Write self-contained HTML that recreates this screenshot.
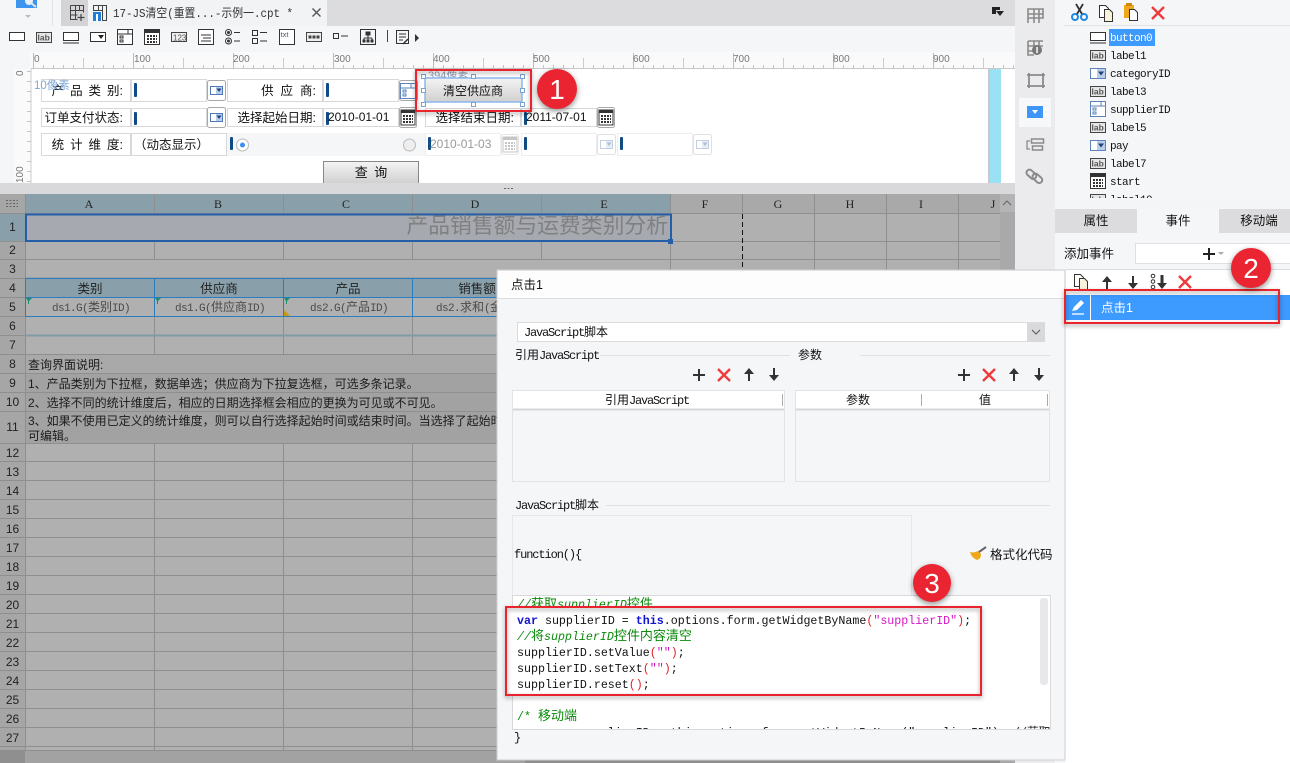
<!DOCTYPE html>
<html><head><meta charset="utf-8"><style>
html,body{margin:0;padding:0;background:#fff;width:1290px;height:763px;overflow:hidden}
svg{display:block}
text{font-family:"Liberation Sans","Noto Sans CJK SC",sans-serif;font-size:12px;fill:#111;white-space:pre}
.m,.m text{font-family:"Liberation Mono","Noto Sans CJK SC",monospace;font-size:11px;letter-spacing:-.6px}
.c{font-size:12px;letter-spacing:0}
.cd{font-family:"Liberation Mono","Noto Sans CJK SC",monospace;font-size:11.65px}
.zh{font-size:13px;font-style:normal;letter-spacing:0}
.rn{text-anchor:middle;font-size:12px;fill:#222}
.ch{font-family:"Liberation Serif",serif;font-size:12px;text-anchor:middle;fill:#222}
.rl{font-size:10px;fill:#777}
.lb{fill:#fff;stroke:#d8d8d8}
.fl{font-size:12.5px;text-anchor:end}
</style></head><body>
<svg width="1290" height="763" viewBox="0 0 1290 763" xmlns="http://www.w3.org/2000/svg">
<defs>
<pattern id="tx" x="33" y="62" width="10" height="7" patternUnits="userSpaceOnUse"><rect x="0" y="3" width="1" height="4" fill="#c4c4c4"/></pattern>
<pattern id="ty" x="24" y="71" width="7" height="10" patternUnits="userSpaceOnUse"><rect x="3" y="0" width="4" height="1" fill="#c4c4c4"/></pattern>
<pattern id="rows" x="0" y="443" width="1000" height="19" patternUnits="userSpaceOnUse"><rect x="0" y="18" width="1000" height="1" fill="#8f8f8f"/></pattern>
<linearGradient id="g" x1="0" y1="0" x2="0" y2="1"><stop offset="0" stop-color="#f4f4f4"/><stop offset="1" stop-color="#d0d0d0"/></linearGradient>
<g id="dd"><rect x=".5" y=".5" width="18" height="20" rx="2" fill="#fff" stroke="#a8a8a8"/><rect x="3.5" y="6.5" width="12" height="8" fill="#fff" stroke="#4f79b5"/><rect x="9" y="7" width="6" height="7" fill="#b9cdea"/><path d="M9.500 8.500h5l-2.500 3.500z" fill="#24407a"/></g>
<g id="cal"><rect x=".5" y=".5" width="17" height="20" rx="2" fill="#fff" stroke="#a8a8a8"/><rect x="2" y="3" width="14" height="15" fill="#fff" stroke="#333"/><rect x="2" y="3" width="14" height="3" fill="#333"/><path d="M4 9h10M4 12h10M4 15h10" stroke="#333" stroke-dasharray="2 1" stroke-width="2"/></g>
<g id="lab"><rect x=".5" y=".5" width="15" height="10" fill="#e6e6e6" stroke="#444"/><text x="1.500" y="8.500" style="font-size:8.500px;fill:#555;font-weight:bold">lab</text></g>
<g id="btn"><rect x=".5" y=".5" width="15" height="8" fill="#fff" stroke="#333"/><path d="M0 11h16" stroke="#333"/></g>
<g id="ddi"><rect x=".5" y=".5" width="15" height="10" fill="#fff" stroke="#5d83b8"/><rect x="7" y="1" width="8" height="9" fill="#b9cdea"/><path d="M8 3.500h6l-3 4z" fill="#24407a"/></g>
<g id="sup"><rect x=".5" y=".5" width="15" height="15" fill="#fff" stroke="#5d83b8"/><path d="M1 5h14M11 1v4" stroke="#5d83b8"/><rect x="3" y="7" width="3" height="2" fill="none" stroke="#5d83b8"/><rect x="3" y="11" width="3" height="2" fill="none" stroke="#5d83b8"/></g>
<g id="calI"><rect x=".5" y=".5" width="15" height="15" fill="#fff" stroke="#333"/><rect x="1" y="1" width="14" height="3" fill="#333"/><path d="M3 7h10M3 10h10M3 13h10" stroke="#333" stroke-dasharray="2 1" stroke-width="2"/></g>
<g id="x"><path d="M1 1l12 12M13 1L1 13" stroke="#ee3b3b" stroke-width="2.400" fill="none"/></g>
<g id="plus"><path d="M6 0v12M0 6h12" stroke="#333" stroke-width="2" fill="none"/></g>
<g id="up"><path d="M5 13V4" stroke="#333" stroke-width="2"/><path d="M0 6l5-6 5 6z" fill="#333"/></g>
<g id="down"><path d="M5 0v9" stroke="#333" stroke-width="2"/><path d="M0 7l5 6 5-6z" fill="#333"/></g>
<g id="copy"><path d="M1.500.5h6l3 3v9h-9z" fill="#fff" stroke="#333"/><path d="M6.500 4.500h5l3 3v9h-8z" fill="#f9f1d9" stroke="#333"/></g>
<g id="h"><rect x=".5" y=".5" width="4" height="4" fill="#fff" stroke="#7aa3d4"/></g>
</defs>

<!-- base chrome -->
<rect width="1290" height="763" fill="#f4f5f7"/>
<rect x="0" y="0" width="61" height="26" fill="#f5f6f7"/>
<rect x="61" y="0" width="954" height="26" fill="#dcdcde"/>
<rect x="61" y="0" width="27" height="26" fill="#d4d4d6"/>
<rect x="88" y="0" width="239" height="26" fill="#f2f3f5"/>
<rect x="0" y="26" width="1015" height="26" fill="#f5f6f8"/>
<rect x="0" y="52" width="1015" height="131" fill="#f5f6f8"/>
<!-- logo -->
<rect x="16" y="0" width="21" height="8" fill="#3d95ee"/>
<circle cx="29" cy="1" r="4" fill="#e8f1fb"/><path d="M31 3l5 4" stroke="#dfe6ee" stroke-width="2"/>
<path d="M25 15h6l-3 3z" fill="#bcbcbc"/>
<path d="M52.500 0v26" stroke="#e4e4e6"/>
<!-- tab icons -->
<g fill="none" stroke="#444"><path d="M70.500 5.500h13v7M70.500 5.500v14h7M70.500 10.500h13M75.500 5.500v14M70.500 15h7M79.500 5.500v5"/><path d="M81 14v7M77.500 17.500h7" stroke-width="1.200"/></g>
<g fill="none" stroke="#444"><path d="M93.500 5.500h13v15h-4v-10h-9zM98.500 5.500v5M102.500 5.500v15"/></g>
<rect x="93" y="12" width="8" height="9" fill="#1f7ed6"/><rect x="96" y="14" width="2" height="7" fill="#fff"/>
<text x="113" y="17" textLength="180" lengthAdjust="spacingAndGlyphs" style="font-family:'Liberation Mono','Noto Sans CJK SC',monospace;font-size:12px;fill:#333">17-JS清空(重置...-示例一.cpt *</text>
<path d="M312.500 8.500l8 8M320.500 8.500l-8 8" stroke="#555" stroke-width="1.400"/>
<path d="M992 7h8v3h-4v4h-4z" fill="#222"/><path d="M996 11h8l-4 5z" fill="#222"/>

<!-- toolbar icons -->
<g transform="translate(9,32)"><rect x=".5" y=".5" width="15" height="8" fill="#fff" stroke="#333"/></g>
<use href="#lab" x="36" y="32"/>
<use href="#btn" x="63" y="32"/>
<g transform="translate(90,32)"><rect x=".5" y=".5" width="15" height="9" fill="#fff" stroke="#333"/><path d="M8 3h6l-3 4z" fill="#222"/></g>
<g transform="translate(117,29)"><rect x=".5" y=".5" width="15" height="15" fill="#fff" stroke="#333"/><path d="M1 5h14M11 1v4" stroke="#333"/><rect x="3" y="7" width="3" height="2" fill="none" stroke="#333"/><rect x="3" y="11" width="3" height="2" fill="none" stroke="#333"/></g>
<use href="#calI" x="144" y="29"/>
<g transform="translate(171,32)"><rect x=".5" y=".5" width="15" height="9" fill="#eee" stroke="#444"/><text x="2" y="8.500" style="font-size:8px;fill:#555">123</text></g>
<g transform="translate(198,29)"><rect x=".5" y=".5" width="15" height="15" fill="#fff" stroke="#333"/><path d="M3 6h10M5 9h8M3 12h10" stroke="#333"/></g>
<g transform="translate(225,29)" fill="none" stroke="#333"><circle cx="3.500" cy="3.500" r="3"/><circle cx="3.500" cy="12" r="3"/><path d="M9 3.500h6M9 12h6"/></g>
<circle cx="228.500" cy="32.500" r="1.500" fill="#333"/><circle cx="228.500" cy="41" r="1.500" fill="#333"/>
<g transform="translate(252,29)" fill="none" stroke="#333"><rect x=".5" y="1.500" width="5" height="5"/><rect x=".5" y="9.500" width="5" height="5"/><path d="M8 3.500h7M8 12h7"/></g>
<g transform="translate(279,29)"><rect x=".5" y=".5" width="15" height="15" fill="#fff" stroke="#333"/><text x="1.500" y="8" style="font-size:7.500px;fill:#555">txt</text></g>
<g transform="translate(306,32)"><rect x=".5" y=".5" width="15" height="9" fill="#eee" stroke="#444"/><path d="M2.500 5h11" stroke="#444" stroke-width="3" stroke-dasharray="3 1"/></g>
<g transform="translate(333,33)" fill="none" stroke="#333"><rect x=".5" y=".5" width="5" height="5"/><path d="M8 3h7"/></g>
<g transform="translate(360,29)" fill="none" stroke="#333"><rect x=".5" y=".5" width="15" height="15"/><rect x="6" y="3" width="4" height="3" fill="#333"/><path d="M8 6v3M4 9h8M4 9v2M8 9v2M12 9v2"/><path d="M3 11h2v2H3zM7 11h2v2H7zM11 11h2v2h-2z" fill="#333"/></g>
<path d="M387.500 30v12" stroke="#444"/>
<g transform="translate(396,30)" fill="none" stroke="#333"><rect x=".5" y=".5" width="12" height="13"/><path d="M3 4h7M3 7h7M3 10h4"/><path d="M7 14l5-5" stroke-width="1.500"/></g>
<path d="M415 34l4 4-4 4z" fill="#333"/>

<!-- ruler -->
<rect x="30" y="52" width="985" height="17" fill="#fafafb"/>
<rect x="33" y="62" width="982" height="7" fill="url(#tx)"/>
<path d="M33.500 53v16M133.500 53v16M233.500 53v16M333.500 53v16M433.500 53v16M533.500 53v16M633.500 53v16M733.500 53v16M833.500 53v16M933.500 53v16" stroke="#bbb"/>
<path d="M83.500 58v11M183.500 58v11M283.500 58v11M383.500 58v11M483.500 58v11M583.500 58v11M683.500 58v11M783.500 58v11M883.500 58v11M983.500 58v11" stroke="#ccc"/>
<text class="rl" x="34" y="62">0</text><text class="rl" x="134" y="62">100</text><text class="rl" x="233" y="62">200</text><text class="rl" x="334" y="62">300</text><text class="rl" x="433" y="62">400</text><text class="rl" x="533" y="62">500</text><text class="rl" x="633" y="62">600</text><text class="rl" x="733" y="62">700</text><text class="rl" x="833" y="62">800</text><text class="rl" x="933" y="62">900</text>
<rect x="14" y="69" width="17" height="114" fill="#fafafb"/>
<rect x="24" y="71" width="7" height="112" fill="url(#ty)"/>
<text class="rl" transform="translate(23,76) rotate(-90)">0</text>
<text class="rl" transform="translate(23,183) rotate(-90)">100</text>
<!-- canvas -->
<rect x="31" y="69" width="984" height="114" fill="#fff"/>
<path d="M31 68.500h984" stroke="#c8c8c8"/>
<path d="M31 69v114" stroke="#ccc"/>
<rect x="990" y="69" width="11" height="114" fill="#9be1f5"/>
<rect x="988" y="69" width="2" height="114" fill="#c9c9cb"/>

<!-- form row 1 -->
<rect class="lb" x="41.500" y="79.500" width="89" height="22"/>
<text class="fl" x="123" y="95" style="word-spacing:2.500px">产 品 类 别:</text>
<rect class="lb" x="131.500" y="79.500" width="75" height="22"/>
<rect x="134" y="83" width="3" height="14" rx="1" fill="#0f4b85"/>
<use href="#dd" x="207" y="80"/>
<rect class="lb" x="227.500" y="79.500" width="95" height="22"/>
<text class="fl" x="316" y="95" style="word-spacing:3.500px">供 应 商:</text>
<rect class="lb" x="323.500" y="79.500" width="75" height="22"/>
<rect x="326" y="83" width="3" height="14" rx="1" fill="#0f4b85"/>
<g transform="translate(399,80)"><rect x=".5" y=".5" width="18" height="20" rx="2" fill="#fff" stroke="#a8a8a8"/><use href="#sup" x="1" y="3"/></g>
<!-- form row 2 -->
<rect class="lb" x="41.500" y="108.500" width="89" height="18"/>
<text class="fl" x="123" y="122">订单支付状态:</text>
<rect class="lb" x="131.500" y="108.500" width="75" height="18"/>
<rect x="134" y="112" width="3" height="13" rx="1" fill="#0f4b85"/>
<use href="#dd" x="207" y="107"/>
<rect class="lb" x="227.500" y="108.500" width="95" height="18"/>
<text class="fl" x="316" y="122">选择起始日期:</text>
<rect class="lb" x="323.500" y="108.500" width="75" height="18"/>
<rect x="326" y="112" width="3" height="13" rx="1" fill="#0f4b85"/>
<text x="328" y="121">2010-01-01</text>
<use href="#cal" x="399" y="107"/>
<rect class="lb" x="425.500" y="108.500" width="95" height="18"/>
<text class="fl" x="514" y="122">选择结束日期:</text>
<rect class="lb" x="521.500" y="108.500" width="75" height="18"/>
<rect x="524" y="112" width="3" height="13" rx="1" fill="#0f4b85"/>
<text x="526" y="121">2011-07-01</text>
<use href="#cal" x="597" y="107"/>
<!-- form row 3 -->
<rect class="lb" x="41.500" y="133.500" width="89" height="22"/>
<text class="fl" x="123" y="149" style="word-spacing:2.500px">统 计 维 度:</text>
<rect class="lb" x="131.500" y="133.500" width="95" height="22"/>
<text x="134" y="149" style="font-size:12.500px">（动态显示）</text>
<rect x="227" y="133" width="198" height="23" fill="#f5f6f7"/>
<rect x="230" y="137" width="3" height="13" rx="1" fill="#0f4b85"/>
<circle cx="242.500" cy="145" r="6" fill="#fff" stroke="#bbb"/><circle cx="242.500" cy="145" r="2.500" fill="#3d8ef0"/>
<circle cx="409.500" cy="145" r="6" fill="#eee" stroke="#bbb"/>
<rect class="lb" x="425.500" y="133.500" width="75" height="22" style="stroke:#eee"/>
<rect x="428" y="137" width="3" height="13" rx="1" fill="#0f4b85"/>
<text x="430" y="148" style="fill:#999">2010-01-03</text>
<g opacity=".28" transform="translate(501,134)"><use href="#cal"/></g>
<rect class="lb" x="521.500" y="133.500" width="75" height="22" style="stroke:#eee"/>
<rect x="524" y="137" width="3" height="13" rx="1" fill="#0f4b85"/>
<g opacity=".35" transform="translate(597,134)"><use href="#dd"/></g>
<rect class="lb" x="617.500" y="133.500" width="75" height="22" style="stroke:#eee"/>
<rect x="620" y="137" width="3" height="13" rx="1" fill="#0f4b85"/>
<g opacity=".35" transform="translate(693,134)"><use href="#dd"/></g>
<!-- query -->
<rect x="323.500" y="161.500" width="95" height="22" fill="url(#g)" stroke="#888"/>
<text x="371" y="177" text-anchor="middle" style="font-size:13px;word-spacing:3px">查 询</text>
<!-- overlay labels -->
<text x="34" y="89" style="font-size:11.500px;fill:#7fa8d8">10像素</text>
<text x="428" y="79" style="font-size:11px;fill:#8f9fb5">394像素</text>
<!-- clear button -->
<rect x="425" y="78" width="97" height="24" fill="url(#g)" stroke="#8ab8ec" stroke-width="1.500"/>
<text x="473" y="95" text-anchor="middle" style="font-size:12px">清空供应商</text>
<use href="#h" x="421" y="74"/><use href="#h" x="471" y="74"/><use href="#h" x="520" y="74"/><use href="#h" x="421" y="88"/><use href="#h" x="520" y="88"/><use href="#h" x="421" y="102"/><use href="#h" x="471" y="102"/><use href="#h" x="520" y="102"/>

<!-- splitter -->
<rect x="0" y="183" width="1015" height="11" fill="#d9d9db"/>
<path d="M504 188.500h9" stroke="#666" stroke-dasharray="2 1.500"/>

<!-- spreadsheet -->
<rect x="0" y="194" width="1000" height="569" fill="#b0b0b0"/>
<rect x="0" y="194" width="25" height="569" fill="#a6a6a6"/>
<rect x="25" y="194" width="645" height="20" fill="#89a0aa"/>
<rect x="670" y="194" width="330" height="20" fill="#a9a9a9"/>
<rect x="0" y="214" width="25" height="28" fill="#89a0aa"/>
<rect x="25" y="214" width="645" height="28" fill="#a6a9b0"/>
<rect x="25" y="278" width="645" height="19" fill="#89a0aa"/>
<rect x="25" y="373" width="975" height="70" fill="#a2a2a2"/>
<rect x="25" y="354" width="975" height="19" fill="#a9a9a9"/>
<rect x="25" y="443" width="975" height="310" fill="url(#rows)"/>
<rect x="0" y="443" width="25" height="310" fill="url(#rows)"/>
<g stroke="#8f8f8f">
<path d="M0 213.500h1000M670 241.500h330M25 259.500h975M25 278h975M670 297.500h330M670 316.500h330M25 335h975M25 354.500h975M25 373.500h975M25 392.500h975M25 411.500h975M25 443.500h975M0 259.500h25M0 278.500h25M0 297.500h25M0 316.500h25M0 335.500h25M0 354.500h25M0 373.500h25M0 392.500h25M0 411.500h25M0 443.500h25M0 241.500h25"/>
<path d="M154.500 194v20M283.500 194v20M412.500 194v20M541.500 194v20M670.500 194v556M814.500 194v556M886.500 194v556M958.500 194v556M742.500 194v20"/>
<path d="M154.500 242v18M283.500 242v18M412.500 242v18M541.500 242v18M154.500 317v37M283.500 317v37M412.500 317v37M541.500 317v37M154.500 443v307M283.500 443v307M412.500 443v307M541.500 443v307M742.500 270v480"/>
<path d="M25.500 194v556"/>
</g>
<path d="M25 335.500h975" stroke="#7f9ca6" stroke-width="2"/>
<path d="M742.500 214v56" stroke="#111" stroke-dasharray="5 3"/>
<g stroke="#2a7ec0" fill="none"><path d="M25.500 278.500h645M25.500 297.500h645M25.500 316.500h645M25.500 278v39M154.500 278v39M283.500 278v39M412.500 278v39M541.500 278v39M670.500 278v39"/></g>
<rect x="26" y="214.500" width="645" height="26.500" fill="none" stroke="#245ea8" stroke-width="2"/>
<rect x="668" y="239" width="5" height="5" fill="#245ea8"/>
<text class="ch" x="89" y="208">A</text><text class="ch" x="218" y="208">B</text><text class="ch" x="346" y="208">C</text><text class="ch" x="475" y="208">D</text><text class="ch" x="604" y="208">E</text><text class="ch" x="705" y="208">F</text><text class="ch" x="778" y="208">G</text><text class="ch" x="850" y="208">H</text><text class="ch" x="921" y="208">I</text><text class="ch" x="993" y="208">J</text>
<path d="M6 200.500h12M6 203.500h12M6 206.500h12" stroke="#666" stroke-dasharray="2 1.500"/>
<text class="rn" x="12.500" y="231">1</text><text class="rn" x="12.500" y="254">2</text><text class="rn" x="12.500" y="273">3</text><text class="rn" x="12.500" y="292">4</text><text class="rn" x="12.500" y="311">5</text><text class="rn" x="12.500" y="330">6</text><text class="rn" x="12.500" y="349">7</text><text class="rn" x="12.500" y="368">8</text><text class="rn" x="12.500" y="387">9</text><text class="rn" x="12.500" y="406">10</text><text class="rn" x="12.500" y="431">11</text><text class="rn" x="12.500" y="457">12</text><text class="rn" x="12.500" y="476">13</text><text class="rn" x="12.500" y="495">14</text><text class="rn" x="12.500" y="514">15</text><text class="rn" x="12.500" y="533">16</text><text class="rn" x="12.500" y="552">17</text><text class="rn" x="12.500" y="571">18</text><text class="rn" x="12.500" y="590">19</text><text class="rn" x="12.500" y="609">20</text><text class="rn" x="12.500" y="628">21</text><text class="rn" x="12.500" y="647">22</text><text class="rn" x="12.500" y="666">23</text><text class="rn" x="12.500" y="685">24</text><text class="rn" x="12.500" y="704">25</text><text class="rn" x="12.500" y="723">26</text><text class="rn" x="12.500" y="742">27</text>
<text x="668" y="233" text-anchor="end" style="font-size:21.800px;fill:#808080">产品销售额与运费类别分析</text>
<text x="90" y="293" text-anchor="middle" style="font-size:12.500px;fill:#222">类别</text><text x="219" y="293" text-anchor="middle" style="font-size:12.500px;fill:#222">供应商</text><text x="348" y="293" text-anchor="middle" style="font-size:12.500px;fill:#222">产品</text><text x="477" y="293" text-anchor="middle" style="font-size:12.500px;fill:#222">销售额</text>
<g class="m">
<text x="52" y="311" style="fill:#4a4a4a">ds1.G(<tspan class="c" style="fill:#4a4a4a">类别</tspan>ID)</text>
<text x="175" y="311" style="fill:#4a4a4a">ds1.G(<tspan class="c" style="fill:#4a4a4a">供应商</tspan>ID)</text>
<text x="310" y="311" style="fill:#4a4a4a">ds2.G(<tspan class="c" style="fill:#4a4a4a">产品</tspan>ID)</text>
<text x="436" y="311" style="fill:#4a4a4a">ds2.<tspan class="c" style="fill:#4a4a4a">求和</tspan>(<tspan class="c" style="fill:#4a4a4a">金额</tspan>)</text>
</g>
<path d="M26 298h6l-3 3v3h-1v-3zM155 298h6l-3 3v3h-1v-3zM284 298h6l-3 3v3h-1v-3z" fill="#1e8c6e"/>
<path d="M284 310l6 6h-6z" fill="#c89a12"/>
<text x="28" y="369" style="fill:#1c1c1c;font-size:12px">查询界面说明:</text>
<text x="28" y="388" style="fill:#1c1c1c;font-size:12px">1、产品类别为下拉框，数据单选；供应商为下拉复选框，可选多条记录。</text>
<text x="28" y="407" style="fill:#1c1c1c;font-size:12px">2、选择不同的统计维度后，相应的日期选择框会相应的更换为可见或不可见。</text>
<text x="28" y="425" style="fill:#1c1c1c;font-size:12px">3、如果不使用已定义的统计维度，则可以自行选择起始时间或结束时间。当选择了起始时间或结束时间后</text>
<text x="28" y="440" style="fill:#1c1c1c;font-size:12px">可编辑。</text>
<!-- sheet scrollbars -->
<rect x="1000" y="194" width="15" height="569" fill="#a9a9a9"/>
<rect x="1000" y="194" width="15" height="18" fill="#b4b4b4"/>
<path d="M1003 205l4-4 4 4" fill="none" stroke="#666"/>
<rect x="0" y="750" width="1000" height="13" fill="#8f8f8f"/>
<rect x="25" y="751" width="500" height="12" fill="#a2a2a2"/>

<!-- right icon rail -->
<rect x="1015" y="0" width="40" height="763" fill="#ebebed"/>
<g fill="none" stroke="#8a8a8a" stroke-width="1.600">
<path d="M1028 9h15v9h-15zM1028 9v14M1043 9v9M1034 9v14M1039 9v14M1028 14h15"/>
<path d="M1028 41h15M1028 41v14h6M1028 46h15M1028 51h6M1034 41v5M1039 41v5"/>
<path d="M1027 75h18M1027 86h18M1029 73v15M1043 73v15" stroke-width="1.800"/>
<path d="M1030 141h-3v8h3" stroke-width="1.300"/><rect x="1031.500" y="139" width="12" height="4" stroke-width="1.500"/><rect x="1032.500" y="146" width="10" height="4" stroke-width="1.500"/>
<rect x="1026" y="171" width="11" height="6" rx="3" transform="rotate(42 1031 174)" stroke-width="2"/>
<rect x="1032" y="175" width="11" height="6" rx="3" transform="rotate(42 1037 178)" stroke-width="2"/>
</g>
<circle cx="1037" cy="50" r="5" fill="#777"/><rect x="1036.300" y="47" width="1.500" height="6" fill="#fff"/>
<rect x="1019" y="98" width="32" height="29" fill="#f7f8f9"/>
<rect x="1027" y="106" width="16" height="12" fill="#3d95f7"/><path d="M1032 110h6l-3 4z" fill="#fff"/>

<!-- right panel -->
<rect x="1055" y="0" width="235" height="763" fill="#f5f6f8"/>
<path d="M1064 25.500h226" stroke="#e3e3e5"/>
<g fill="none" stroke="#1e88e5" stroke-width="2"><circle cx="1075" cy="17" r="3"/><circle cx="1084" cy="17" r="3"/></g>
<path d="M1076 4l6 10M1083 4l-6 10" stroke="#333" stroke-width="1.800"/>
<use href="#copy" x="1098" y="5"/>
<rect x="1124" y="5" width="10" height="13" fill="#f0a818"/><rect x="1126" y="3" width="6" height="3" fill="#d08a10"/>
<path d="M1129.500 9.500h5l3 3v8h-8z" fill="#fff" stroke="#333"/>
<use href="#x" x="1151" y="6"/>
<!-- tree -->
<use href="#btn" x="1090" y="32"/>
<use href="#lab" x="1090" y="50"/>
<use href="#ddi" x="1090" y="68"/>
<use href="#lab" x="1090" y="86"/>
<use href="#sup" x="1090" y="101"/>
<use href="#lab" x="1090" y="122"/>
<use href="#ddi" x="1090" y="140"/>
<use href="#lab" x="1090" y="158"/>
<use href="#calI" x="1090" y="173"/>
<rect x="1109" y="29" width="46" height="17" fill="#3d9aff"/>
<g class="m">
<text x="1110" y="41" style="fill:#fff">button0</text>
<text x="1110" y="59">label1</text>
<text x="1110" y="77">categoryID</text>
<text x="1110" y="95">label3</text>
<text x="1110" y="113">supplierID</text>
<text x="1110" y="131">label5</text>
<text x="1110" y="149">pay</text>
<text x="1110" y="167">label7</text>
<text x="1110" y="185">start</text>
<text x="1110" y="203">label10</text>
</g>
<use href="#lab" x="1090" y="194"/>
<rect x="1055" y="198" width="235" height="11" fill="#f4f5f7"/>
<!-- tabs -->
<rect x="1055" y="209" width="82" height="24" fill="#dcdcde"/>
<rect x="1219" y="209" width="71" height="24" fill="#dcdcde"/>
<text x="1096" y="225" text-anchor="middle" style="font-size:12.500px">属性</text>
<text x="1178" y="225" text-anchor="middle" style="font-size:12.500px">事件</text>
<text x="1259" y="225" text-anchor="middle" style="font-size:12.500px">移动端</text>
<text x="1064" y="258" style="font-size:12.500px">添加事件</text>
<rect x="1135.500" y="243.500" width="160" height="20" fill="#fff" stroke="#e0e0e2"/>
<path d="M1209 248v12M1203 254h12" stroke="#222" stroke-width="2"/><path d="M1218 252h6l-3 3z" fill="#aaa"/>
<path d="M1066 269.500h224" stroke="#dcdcde"/>
<rect x="1066" y="270" width="224" height="25" fill="#fff"/>
<use href="#copy" x="1073" y="274"/>
<use href="#up" x="1102" y="276"/>
<use href="#down" x="1128" y="276"/>
<circle cx="1153" cy="276" r="1.800" fill="none" stroke="#333"/><circle cx="1153" cy="281.500" r="1.800" fill="none" stroke="#333"/><circle cx="1153" cy="287" r="1.800" fill="none" stroke="#333"/><g transform="translate(1157,275)"><path d="M5 0v9" stroke="#333" stroke-width="3"/><path d="M0 8l5 6 5-6z" fill="#333"/></g>
<use href="#x" x="1178" y="275"/>
<rect x="1066" y="295" width="224" height="25" fill="#3d9aff"/>
<path d="M1090.500 295v25" stroke="#fff"/>
<path d="M1072 311l2-4 7-7 3 3-7 7z" fill="#fff"/><path d="M1072 314h12" stroke="#fff" stroke-width="1.300"/>
<text x="1101" y="312" style="font-size:12.500px;fill:#fff">点击1</text>
<rect x="1065" y="320" width="225" height="443" fill="#fff"/>

<!-- dialog -->
<rect x="497" y="270" width="568" height="490" fill="#f5f6f8" stroke="#cfcfd1"/>
<rect x="498" y="271" width="566" height="27" fill="#fdfdfe"/>
<path d="M498 298.500h566" stroke="#dcdcde"/>
<text x="511" y="289" style="font-size:12.500px">点击1</text>
<rect x="517.500" y="322.500" width="527" height="19" fill="#fff" stroke="#dcdcde"/>
<rect x="1027" y="323" width="18" height="19" fill="#d9d9db"/>
<path d="M1032 330l4 4 4-4" fill="none" stroke="#555"/>
<text class="m" x="524" y="336"><tspan style="font-size:12px;letter-spacing:-1.200px">JavaScript</tspan><tspan class="c">脚本</tspan></text>
<path d="M600 355.500h190M860 355.500h190M606 505.500h444" stroke="#e0e0e2"/>
<text class="m" x="515" y="359"><tspan class="c">引用</tspan><tspan style="font-size:12px;letter-spacing:-1.200px">JavaScript</tspan></text>
<text x="798" y="359">参数</text>
<use href="#plus" x="693" y="369"/><use href="#x" x="717" y="368"/><use href="#up" x="744" y="368"/><use href="#down" x="769" y="368"/>
<use href="#plus" x="958" y="369"/><use href="#x" x="982" y="368"/><use href="#up" x="1009" y="368"/><use href="#down" x="1034" y="368"/>
<rect x="512.500" y="390.500" width="272" height="91" fill="#f5f6f8" stroke="#e3e3e5"/>
<rect x="513" y="391" width="271" height="18" fill="#fff"/>
<path d="M513 409.500h271" stroke="#d6d6d8" stroke-width="2"/>
<path d="M782.500 394v12" stroke="#aaa"/>
<text class="m" x="605" y="404"><tspan class="c">引用</tspan><tspan style="font-size:12px;letter-spacing:-1.200px">JavaScript</tspan></text>
<rect x="795.500" y="390.500" width="254" height="91" fill="#f5f6f8" stroke="#e3e3e5"/>
<rect x="796" y="391" width="253" height="18" fill="#fff"/>
<path d="M796 409.500h253" stroke="#d6d6d8" stroke-width="2"/>
<path d="M921.500 394v12M1047.500 394v12" stroke="#aaa"/>
<text x="858" y="404" text-anchor="middle">参数</text>
<text x="985" y="404" text-anchor="middle">值</text>
<text class="m" x="515" y="509"><tspan style="font-size:12px;letter-spacing:-1.200px">JavaScript</tspan><tspan class="c">脚本</tspan></text>
<path d="M512.500 515.500h399v80M512.500 515.500v80" fill="none" stroke="#e8e8ea"/>
<text class="m" x="514" y="558" style="font-size:12px;letter-spacing:-1.100px">function(){</text>
<path d="M977 560c-4-2-6-4-7-8 3 1 6 0 8-1l3 3c0 3-1 5-4 6z" fill="#f0a818"/><path d="M979 552l7-5" stroke="#666" stroke-width="2"/>
<text x="990" y="559" style="font-size:12.500px">格式化代码</text>
<!-- code -->
<rect x="512.500" y="595.500" width="538" height="134" fill="#fff" stroke="#d9d9db"/>
<rect x="1040" y="598" width="8" height="87" rx="3" fill="#e8e8ea"/>
<text class="cd" x="517" y="608" style="fill:#0a8a0a;font-style:italic">//<tspan class="zh" style="fill:#0a8a0a">获取</tspan>supplierID<tspan class="zh" style="fill:#0a8a0a">控件</tspan></text>
<rect x="507" y="608" width="473" height="87" fill="#fff"/>
<text class="cd" x="517" y="624"><tspan style="fill:#1212d4;font-weight:bold">var</tspan> supplierID = <tspan style="fill:#1212d4;font-weight:bold">this</tspan>.options.form.getWidgetByName<tspan style="fill:#e0202a">(</tspan><tspan style="fill:#d416c8">"supplierID"</tspan><tspan style="fill:#e0202a">)</tspan>;</text>
<text class="cd" x="517" y="640" style="fill:#0a8a0a;font-style:italic">//<tspan class="zh" style="fill:#0a8a0a">将</tspan>supplierID<tspan class="zh" style="fill:#0a8a0a">控件内容清空</tspan></text>
<text class="cd" x="517" y="656">supplierID.setValue<tspan style="fill:#e0202a">(</tspan><tspan style="fill:#d416c8">""</tspan><tspan style="fill:#e0202a">)</tspan>;</text>
<text class="cd" x="517" y="672">supplierID.setText<tspan style="fill:#e0202a">(</tspan><tspan style="fill:#d416c8">""</tspan><tspan style="fill:#e0202a">)</tspan>;</text>
<text class="cd" x="517" y="688">supplierID.reset<tspan style="fill:#e0202a">()</tspan>;</text>
<text class="cd" x="517" y="720" style="fill:#0a8a0a">/* <tspan class="zh" style="fill:#0a8a0a">移动端</tspan></text>
<text class="cd" x="517" y="736">&#160;&#160;&#160;&#160;&#160;&#160;&#160;&#160;&#160;supplierID = this.options.form.getWidgetByName("supplierID"); //获取</text>
<rect x="498" y="730" width="566" height="29" fill="#f5f6f8"/>
<path d="M512 729.500h539" stroke="#d9d9db"/>
<text class="m" x="514" y="741" style="font-size:12px">}</text>

<!-- red highlights -->
<g fill="none" stroke="#e9242c" stroke-width="2" style="filter:drop-shadow(0 2px 2px rgba(0,0,0,.4))">
<rect x="416" y="70" width="115" height="41"/>
<rect x="1065" y="290" width="214" height="33"/>
<rect x="506" y="607" width="475" height="88"/>
</g>
<g style="filter:drop-shadow(0 2px 3px rgba(0,0,0,.45))">
<circle cx="557" cy="89" r="20" fill="#ea2430"/>
<circle cx="1251" cy="268" r="20" fill="#ea2430"/>
<circle cx="932" cy="583" r="19" fill="#ea2430"/>
</g>
<text x="557" y="99" text-anchor="middle" style="font-size:28px;fill:#fff">1</text>
<text x="1251" y="278" text-anchor="middle" style="font-size:28px;fill:#fff">2</text>
<text x="932" y="593" text-anchor="middle" style="font-size:28px;fill:#fff">3</text>
</svg>
</body></html>
